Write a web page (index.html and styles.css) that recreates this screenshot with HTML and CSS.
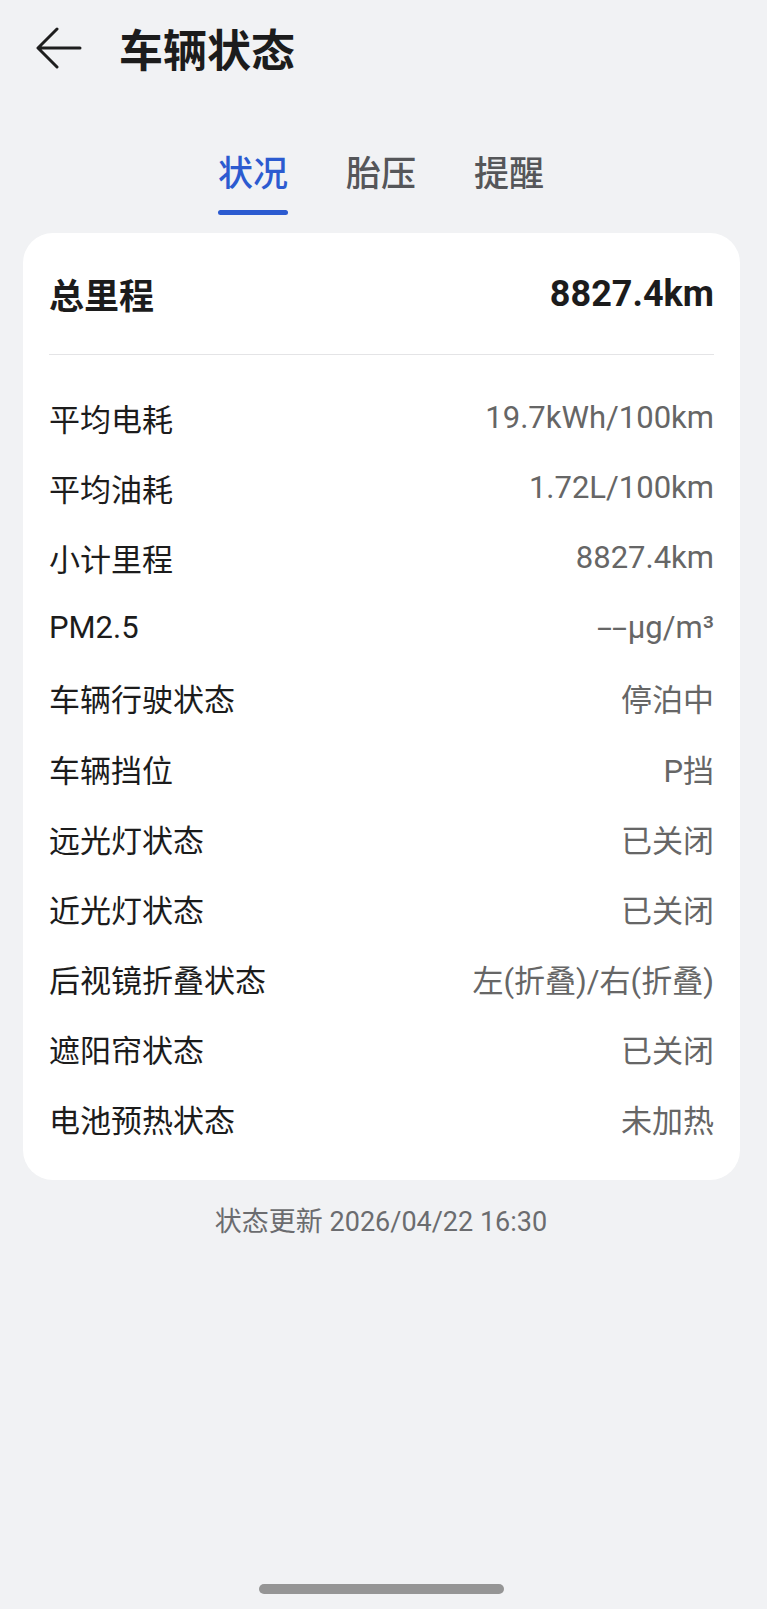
FILE: index.html
```html
<!DOCTYPE html>
<html lang="zh-CN">
<head>
<meta charset="utf-8">
<title>车辆状态</title>
<link rel="stylesheet" href="styles.css">
</head>
<body>
<div class="page">
  <header class="topbar">
    <svg class="back" width="46" height="42" viewBox="0 0 46 42" aria-hidden="true">
      <path d="M44 21 H3 M21 2 L2 21 L21 40" fill="none" stroke="#1e1e1e" stroke-width="3" stroke-linecap="round" stroke-linejoin="round"/>
    </svg>
    <h1 class="title">车辆状态</h1>
  </header>

  <nav class="tabs">
    <div class="tab active"><span>状况</span></div>
    <div class="tab"><span>胎压</span></div>
    <div class="tab"><span>提醒</span></div>
  </nav>

  <section class="card">
    <div class="row head">
      <span class="label">总里程</span>
      <span class="value">8827.4km</span>
    </div>
    <div class="list">
      <div class="row"><span class="label">平均电耗</span><span class="value">19.7kWh/100km</span></div>
      <div class="row"><span class="label">平均油耗</span><span class="value">1.72L/100km</span></div>
      <div class="row"><span class="label">小计里程</span><span class="value">8827.4km</span></div>
      <div class="row"><span class="label">PM2.5</span><span class="value"><span class="dash">--</span>µg/m³</span></div>
      <div class="row"><span class="label">车辆行驶状态</span><span class="value">停泊中</span></div>
      <div class="row"><span class="label">车辆挡位</span><span class="value">P挡</span></div>
      <div class="row"><span class="label">远光灯状态</span><span class="value">已关闭</span></div>
      <div class="row"><span class="label">近光灯状态</span><span class="value">已关闭</span></div>
      <div class="row"><span class="label">后视镜折叠状态</span><span class="value">左(折叠)/右(折叠)</span></div>
      <div class="row"><span class="label">遮阳帘状态</span><span class="value">已关闭</span></div>
      <div class="row"><span class="label">电池预热状态</span><span class="value">未加热</span></div>
    </div>
  </section>

  <p class="updated">状态更新 2026/04/22 16:30</p>

  <div class="homebar"></div>
</div>
</body>
</html>
```

FILE: styles.css
```css
html, body {
  margin: 0;
  padding: 0;
}

body {
  background: #f1f2f4;
  font-family: Roboto, "Noto Sans CJK SC", sans-serif;
  color: #1c1c1c;
}

.page {
  width: 767px;
  height: 1609px;
  display: flex;
  flex-direction: column;
  box-sizing: border-box;
}

.topbar {
  height: 96px;
  display: flex;
  align-items: center;
  padding-left: 36px;
}

.back {
  display: block;
  flex: none;
}

.title {
  margin: 0 0 0 37px;
  font-size: 44px;
  line-height: 56px;
  font-weight: 600;
  color: #1c1c1c;
  font-family: "Noto Sans CJK SC", sans-serif;
}

.tabs {
  display: flex;
  justify-content: center;
  gap: 58px;
  margin-top: 53px;
  padding-right: 5px;
}

.tab {
  display: flex;
  flex-direction: column;
  align-items: center;
  font-family: "Noto Sans CJK SC", sans-serif;
  font-size: 35px;
  line-height: 44px;
  font-weight: 500;
  color: #555659;
}

.tab::after {
  content: "";
  display: block;
  width: 70px;
  height: 5px;
  border-radius: 3px;
  margin-top: 17px;
  background: transparent;
}

.tab.active {
  color: #2c5bd0;
}

.tab.active::after {
  background: #2c5bd0;
}

.card {
  margin: 18px 0 0 23px;
  width: 717px;
  box-sizing: border-box;
  background: #ffffff;
  border-radius: 30px;
  padding: 0 26px 26px;
}

.row {
  display: flex;
  justify-content: space-between;
  align-items: center;
  height: 70.2px;
  font-size: 31px;
}

.row .label {
  color: #1c1c1c;
}

.row .value {
  color: #666666;
}

.dash {
  display: inline-block;
  width: 31px;
  transform: scaleX(1.75);
  transform-origin: left center;
}

.row.head {
  height: 121px;
  border-bottom: 1px solid #e4e4e6;
  font-size: 35px;
  font-weight: 700;
}

.row.head .value {
  color: #1c1c1c;
  font-size: 36px;
}

.list {
  padding-top: 27px;
}

.updated {
  margin: 24px 0 0;
  text-align: center;
  padding-right: 5px;
  font-size: 27px;
  line-height: 36px;
  color: #6b6c6f;
}

.homebar {
  margin: auto 0 15px 259px;
  width: 245px;
  height: 10px;
  border-radius: 5px;
  background: #959595;
}
```
